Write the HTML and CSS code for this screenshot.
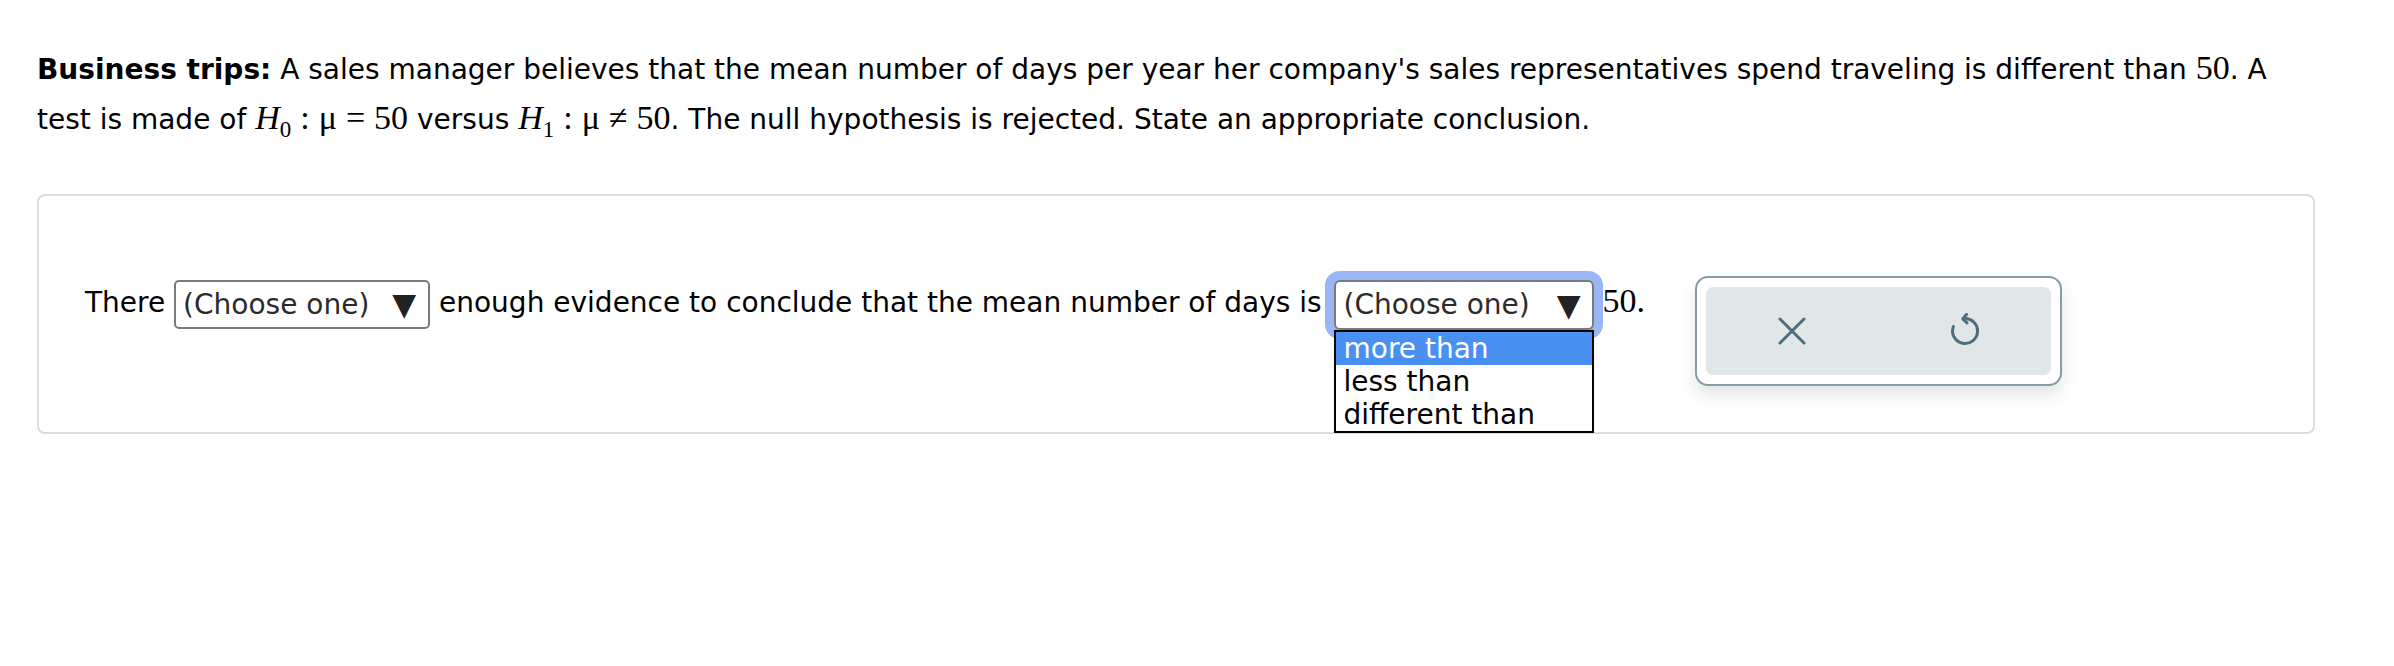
FILE: index.html
```html
<!DOCTYPE html>
<html lang="en">
<head>
<meta charset="utf-8">
<title>Business trips</title>
<link rel="stylesheet" href="styles.css">
</head>
<body>
<div class="page">
  <p class="question"><b>Business trips:</b> A sales manager believes that the mean number of days per year her company's sales representatives spend traveling is different than <span class="m">50</span>. A<br>test is made of <span class="m"><i>H</i><sub>0</sub><span class="op">:</span>μ<span class="op">=</span>50</span> versus <span class="m"><i>H</i><sub>1</sub><span class="op">:</span>μ<span class="op">≠</span>50</span>. The null hypothesis is rejected. State an appropriate conclusion.</p>

  <div class="card">
    <div class="row">
      <div class="sentence">There <span class="select"><span class="sel-text">(Choose one)</span><span class="sel-arrow">▼</span></span> enough evidence to conclude that the mean number of days is <span class="select-wrap"><span class="select focused"><span class="sel-text">(Choose one)</span><span class="sel-arrow">▼</span></span><ul class="listbox"><li class="active">more than</li><li>less than</li><li>different than</li></ul></span> <span class="m">50.</span></div>
      <div class="toolbar">
        <div class="tools">
          <button class="tool" aria-label="Clear">
            <svg width="30" height="30" viewBox="0 0 30 30"><path d="M3 3 L27 27 M27 3 L3 27" fill="none" stroke="#4e6e7b" stroke-width="3" stroke-linecap="round"/></svg>
          </button>
          <button class="tool" aria-label="Undo">
            <svg width="36" height="36" viewBox="0 0 36 36"><path d="M16.5 5.6 A12.5 12.5 0 1 1 6.4 13.5" fill="none" stroke="#4e6e7b" stroke-width="3" stroke-linecap="round"/><path d="M19.5 1.5 L15.8 5.8 L20 9.8" fill="none" stroke="#4e6e7b" stroke-width="3" stroke-linecap="round" stroke-linejoin="round"/></svg>
          </button>
        </div>
      </div>
    </div>
  </div>
</div>
</body>
</html>
```

FILE: styles.css
```css
html, body {
  margin: 0;
  padding: 0;
  background: #ffffff;
}

body {
  font-family: "DejaVu Sans", Verdana, sans-serif;
  font-size: 28px;
  color: #000000;
}

.page {
  padding: 0 37px;
}

.question {
  margin: 44px 0 0 0;
  line-height: 48px;
  white-space: nowrap;
}

.question b {
  font-weight: bold;
}

.m {
  font-family: "Liberation Serif", "Times New Roman", serif;
  font-size: 34px;
}

.m i {
  font-style: italic;
}

.m sub {
  font-size: 23px;
  vertical-align: -8px;
  line-height: 0;
}

.op {
  padding: 0 9px;
}

.card {
  box-sizing: border-box;
  margin-top: 50px;
  width: 2278px;
  height: 240px;
  border: 2px solid #d6dde1;
  border-radius: 8px;
  padding: 84px 46px 0 46px;
}

.row {
  display: flex;
  align-items: flex-start;
}

.sentence {
  line-height: 41px;
  white-space: nowrap;
}

.select-wrap {
  position: relative;
  display: inline-block;
  vertical-align: top;
  margin: 0 -1px 0 4px;
  height: 50px;
}

.select {
  box-sizing: border-box;
  display: inline-flex;
  align-items: center;
  justify-content: space-between;
  vertical-align: top;
  width: 256px;
  height: 49px;
  padding: 0 12px 0 7px;
  border: 2px solid #7a7a7a;
  border-radius: 5px;
  color: #2b2b2b;
  background: #ffffff;
  margin: 0;
  line-height: 1;
}

.select-wrap .select {
  width: 260px;
  height: 50px;
}

.select.focused {
  box-shadow: 0 0 0 9px #9ab5f3;
  border-radius: 6px;
}

.sel-arrow {
  font-size: 31px;
  color: #222222;
}

.listbox {
  position: absolute;
  left: 0;
  top: 50px;
  box-sizing: border-box;
  width: 260px;
  margin: 0;
  padding: 0;
  list-style: none;
  border: 2px solid #000000;
  background: #ffffff;
  line-height: 33px;
  z-index: 2;
}

.listbox li {
  padding: 0 7px;
}

.listbox li.active {
  background: #4a8ff2;
  color: #ffffff;
}

.toolbar {
  box-sizing: border-box;
  margin: -4px 0 0 50px;
  width: 367px;
  height: 110px;
  border: 2px solid #879ca5;
  border-radius: 13px;
  padding: 9px;
  background: #ffffff;
  box-shadow: 0 8px 16px rgba(60, 80, 90, 0.16);
}

.tools {
  display: flex;
  height: 100%;
  background: #e1e6e9;
  border-radius: 7px;
}

.tool {
  flex: 1;
  display: flex;
  align-items: center;
  justify-content: center;
  border: 0;
  background: transparent;
  padding: 0;
  cursor: pointer;
}

.tool svg {
  display: block;
}
```
